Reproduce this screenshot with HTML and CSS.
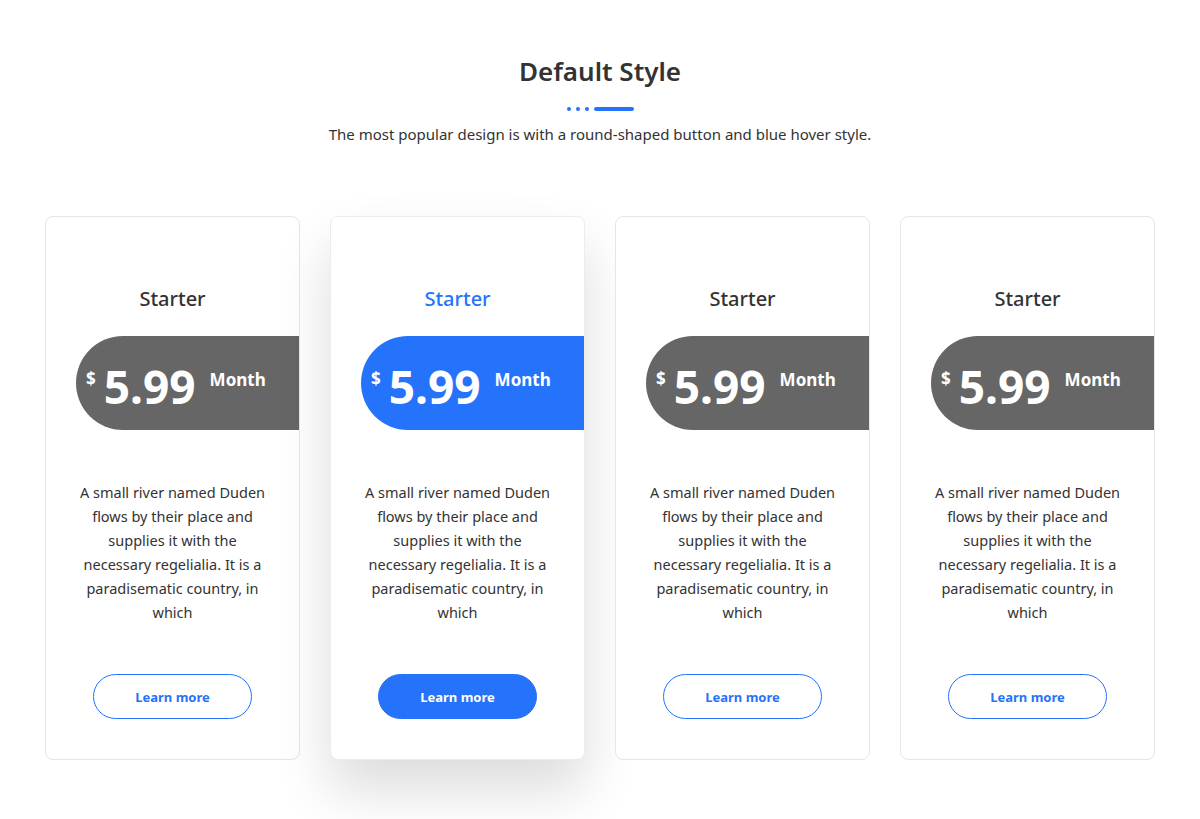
FILE: index.html
```html
<!DOCTYPE html>
<html lang="en">
<head>
<meta charset="utf-8">
<title>Default Style</title>
<link rel="stylesheet" href="styles.css">
</head>
<body>
<section class="pricing">
  <header class="heading">
    <h2 class="heading-title">Default Style</h2>
    <div class="divider"><span class="dot"></span><span class="dot"></span><span class="dot"></span><span class="bar"></span></div>
    <p class="heading-sub">The most popular design is with a round-shaped button and blue hover style.</p>
  </header>
  <div class="cards">
    <div class="card">
      <h3 class="card-title">Starter</h3>
      <div class="price"><span class="cur">$</span><span class="amount">5.99</span><span class="per">Month</span></div>
      <p class="desc">A small river named Duden flows by their place and supplies it with the necessary regelialia. It is a paradisematic country, in which</p>
      <a class="btn" href="#">Learn more</a>
    </div>
    <div class="card card-active">
      <h3 class="card-title">Starter</h3>
      <div class="price"><span class="cur">$</span><span class="amount">5.99</span><span class="per">Month</span></div>
      <p class="desc">A small river named Duden flows by their place and supplies it with the necessary regelialia. It is a paradisematic country, in which</p>
      <a class="btn" href="#">Learn more</a>
    </div>
    <div class="card">
      <h3 class="card-title">Starter</h3>
      <div class="price"><span class="cur">$</span><span class="amount">5.99</span><span class="per">Month</span></div>
      <p class="desc">A small river named Duden flows by their place and supplies it with the necessary regelialia. It is a paradisematic country, in which</p>
      <a class="btn" href="#">Learn more</a>
    </div>
    <div class="card">
      <h3 class="card-title">Starter</h3>
      <div class="price"><span class="cur">$</span><span class="amount">5.99</span><span class="per">Month</span></div>
      <p class="desc">A small river named Duden flows by their place and supplies it with the necessary regelialia. It is a paradisematic country, in which</p>
      <a class="btn" href="#">Learn more</a>
    </div>
  </div>
</section>
</body>
</html>
```

FILE: styles.css
```css
* { box-sizing: border-box; }
html, body { margin: 0; padding: 0; background: #fff; }
body {
  font-family: "Noto Sans", "Open Sans", sans-serif;
  color: #333;
  min-height: 819px;
}
.pricing {
  padding-top: 53px;
}
.heading { text-align: center; }
.heading-title {
  margin: 0;
  font-size: 26px;
  line-height: 36px;
  font-weight: 600;
  color: #333;
}
.divider {
  display: flex;
  justify-content: center;
  align-items: center;
  gap: 5px;
  margin-top: 18px;
  height: 4px;
}
.dot {
  width: 4px; height: 4px; border-radius: 50%;
  background: #2573fb;
}
.bar {
  width: 40px; height: 4px; border-radius: 2px;
  background: #2573fb;
}
.heading-sub {
  margin: 12px 0 0;
  font-size: 15px;
  line-height: 22px;
  color: #333;
}
.cards {
  display: flex;
  justify-content: center;
  gap: 30px;
  margin-top: 71px;
}
.card {
  width: 255px;
  height: 544px;
  border: 1px solid #e6e6e6;
  border-radius: 8px;
  background: #fff;
  overflow: hidden;
  display: flex;
  flex-direction: column;
  align-items: center;
  padding-top: 67px;
}
.card-active {
  box-shadow: 0 30px 55px rgba(0, 0, 0, 0.14);
  border-color: #ececec;
}
.card-title {
  margin: 0;
  font-size: 20px;
  line-height: 30px;
  font-weight: 500;
  color: #333;
}
.card-active .card-title { color: #2573fb; }
.price {
  align-self: stretch;
  margin: 22px 0 0 30px;
  height: 94px;
  border-radius: 47px 0 0 47px;
  background: #666;
  color: #fff;
  display: flex;
  align-items: flex-start;
  padding-left: 10px;
}
.card-active .price { background: #2573fb; }
.cur {
  font-size: 17px;
  font-weight: 700;
  margin-top: 31px;
  line-height: 24px;
}
.amount {
  font-size: 46px;
  font-weight: 700;
  line-height: 60px;
  margin: 20px 0 0 8px;
}
.per {
  font-size: 17px;
  font-weight: 700;
  line-height: 24px;
  margin: 32px 0 0 14px;
}
.desc {
  margin: 50px 0 0;
  width: 192px;
  text-align: center;
  font-size: 14.5px;
  line-height: 24px;
  color: #333;
  height: 144px;
}
.btn {
  margin-top: 50px;
  width: 159px;
  height: 45px;
  border: 1px solid #2573fb;
  border-radius: 23px;
  color: #2573fb;
  text-decoration: none;
  font-size: 13px;
  font-weight: 700;
  display: flex;
  align-items: center;
  justify-content: center;
}
.card-active .btn {
  background: #2573fb;
  color: #fff;
}
```
